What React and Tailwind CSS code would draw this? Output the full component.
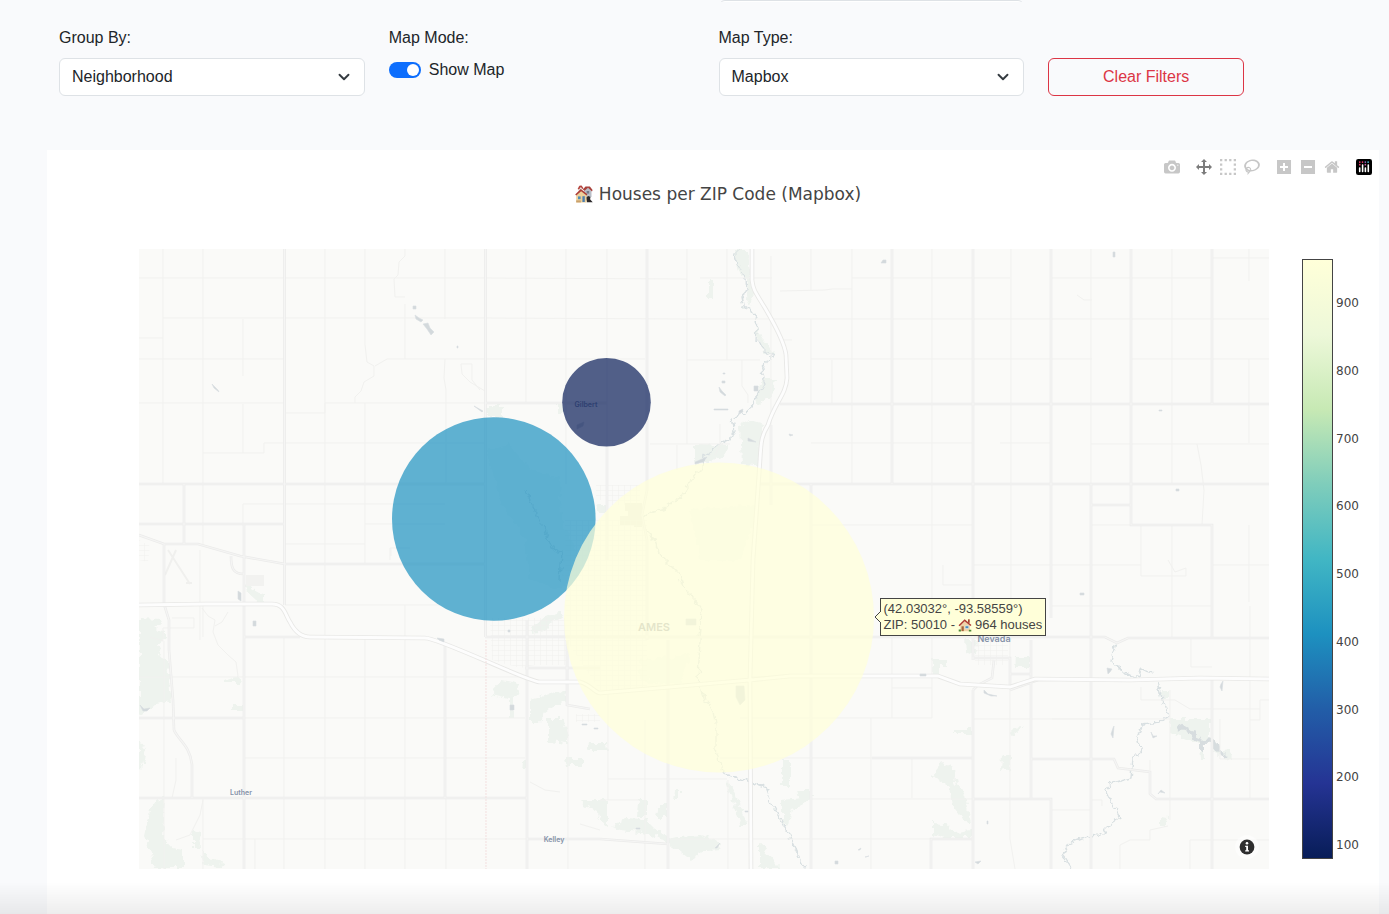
import React from "react";
import { ChevronDown } from "lucide-react";

const FLIP = "matrix(1 0 0 -1 0 850)";

const TOOLS = [
  [
    {
      name: "Download plot as a png",
      width: 1000,
      d: "m500 450c-83 0-150-67-150-150 0-83 67-150 150-150 83 0 150 67 150 150 0 83-67 150-150 150z m400 150h-120c-16 0-34 13-39 29l-31 93c-6 15-23 28-40 28h-340c-16 0-34-13-39-28l-31-94c-6-15-23-28-40-28h-120c-55 0-100-45-100-100v-450c0-55 45-100 100-100h800c55 0 100 45 100 100v450c0 55-45 100-100 100z m-400-550c-138 0-250 112-250 250 0 138 112 250 250 250 138 0 250-112 250-250 0-138-112-250-250-250z m365 380c-19 0-35 16-35 35 0 19 16 35 35 35 19 0 35-16 35-35 0-19-16-35-35-35z",
    },
  ],
  [
    {
      name: "Pan",
      width: 1000,
      active: true,
      d: "m1000 350l-187 188 0-125-250 0 0 250 125 0-188 187-187-187 125 0 0-250-250 0 0 125-188-188 186-187 0 125 252 0 0-250-125 0 187-188 188 188-125 0 0 250 250 0 0-126 187 188z",
    },
    {
      name: "Box Select",
      width: 1000,
      d: "m0 850l0-143 143 0 0 143-143 0z m286 0l0-143 143 0 0 143-143 0z m285 0l0-143 143 0 0 143-143 0z m286 0l0-143 143 0 0 143-143 0z m-857-286l0-143 143 0 0 143-143 0z m857 0l0-143 143 0 0 143-143 0z m-857-285l0-143 143 0 0 143-143 0z m857 0l0-143 143 0 0 143-143 0z m-857-286l0-143 143 0 0 143-143 0z m286 0l0-143 143 0 0 143-143 0z m285 0l0-143 143 0 0 143-143 0z m286 0l0-143 143 0 0 143-143 0z",
    },
    {
      name: "Lasso Select",
      width: 1031,
      d: "m1018 538c-36 207-290 336-568 286-277-48-473-256-436-463 10-57 36-108 76-151-13-66 11-137 68-183 34-28 75-41 114-42l-55-70 0 0c-2-1-3-2-4-3-10-14-8-34 5-45 14-11 34-8 45 4 1 1 2 3 2 5l0 0 113 140c16 11 31 24 45 40 4 3 6 7 8 11 48-3 100 0 151 9 278 48 473 255 436 462z m-624-379c-80 14-149 48-197 96 42 42 109 47 156 9 33-26 47-66 41-105z m-187-74c-19 16-33 37-39 60 50-32 109-55 174-68-42-25-95-24-135 8z m360 75c-34-7-69-9-102-8 8 62-16 128-68 170-73 59-175 54-244-5-9 20-16 40-20 61-28 159 121 317 333 354s407-60 434-217c28-159-121-318-333-355z",
    },
  ],
  [
    {
      name: "Zoom in",
      width: 875,
      d: "m1 787l0-875 875 0 0 875-875 0z m687-500l-187 0 0-187-125 0 0 187-188 0 0 125 188 0 0 187 125 0 0-187 187 0 0-125z",
    },
    {
      name: "Zoom out",
      width: 875,
      d: "m0 788l0-876 876 0 0 876-876 0z m688-500l-500 0 0 125 500 0 0-125z",
    },
    {
      name: "Reset view",
      width: 929,
      d: "m786 296v-267q0-15-11-26t-25-10h-214v214h-143v-214h-214q-15 0-25 10t-11 26v267q0 1 0 2t0 2l321 264 321-264q1-1 1-4z m124 39l-34-41q-5-5-12-6h-2q-7 0-12 3l-386 322-386-322q-7-4-13-4-7 2-12 7l-35 41q-4 5-3 13t6 12l401 334q18 15 42 15t43-15l136-114v109q0 8 5 13t13 5h107q8 0 13-5t5-13v-227l122-102q5-5 6-12t-4-13z",
    },
  ],
];

const TICKS = [900, 800, 700, 600, 500, 400, 300, 200, 100];

const PARKS = [
  "M139 618L162 619 160 626 152 628 166 632 166 638 158 644 160 656 168 660 170 690 172 701 155 704 146 712 139 716Z",
  "M150 810L157 801 165 797 163 838 172 848 183 850 183 868 155 868 150 850 144 836Z",
  "M139 740L146 750 142 770 139 770Z",
  "M193 830L200 832 201 848 193 848ZM200 850L212 858 224 864 222 868 204 866Z",
  "M224 680L236 676 242 680 241 683 224 683ZM234 705H242V711H234Z",
  "M247 584L263 595 263 603 256 600 245 590Z",
  "M530 628L545 617 560 612 563 618 550 622 545 630 533 632Z",
  "M493 690L502 680 517 683 519 694 508 699 495 696ZM509 698H514V718H509Z",
  "M530 700L545 696 555 690 566 692 568 700 555 705 545 712 540 722 530 722Z",
  "M548 718H562L568 736 568 744 548 742Z",
  "M589 743L607 743 608 751 587 751ZM522 760H527V769H521Z",
  "M566 758L582 758 582 766 568 766Z",
  "M580 800L608 800 608 828 603 825 597 812 585 806Z",
  "M612 828L625 818 645 819 655 829 670 838 700 835 718 840 722 850 706 851 690 860 672 846 655 836 640 832 620 830Z",
  "M639 800H646V817H638ZM658 805H668V818H656ZM675 790H680V800H674Z",
  "M726 780L733 788 747 825 741 825 732 800Z",
  "M760 840L765 850 772 860 780 868 760 868Z",
  "M782 800L811 797 803 806 792 810 788 828 782 822ZM782 759H791V786H782ZM797 790H811V798H799Z",
  "M735 250L748 250 750 275 755 290 750 305 747 300 748 280 738 273 736 262Z",
  "M755 318L760 335 768 345 775 355 765 352 756 335Z",
  "M762 380L776 380 771 395 760 404 755 400Z",
  "M740 425L748 420 764 425 760 445 757 465 742 464Z",
  "M695 445L728 446 725 455 710 462 695 465Z",
  "M708 280H714V299H708Z",
  "M486 406H503V417H486ZM557 404H563V413H557ZM597 505H607L605 514 599 514Z",
  "M932 775L943 762 953 768 957 785 965 795 971 822 966 822 953 805 950 787Z",
  "M932 823L945 824 955 832 971 830 971 838 945 838 932 834Z",
  "M933 658H946V666H939V675H933ZM965 640L976 640 974 656 966 652ZM1015 658H1031V667H1014ZM953 729H972V734H952Z",
  "M1002 757L1010 755 1010 769 1001 771ZM1011 728L1024 727 1012 735Z",
  "M1171 719L1210 719 1210 744 1198 743 1171 733Z",
  "M1213 752L1230 750 1232 757 1222 758ZM1160 690H1169V698H1161ZM1161 817L1169 818 1165 827 1161 826ZM1200 745H1204V760H1201Z",
];

const CAMPUS = [
  "M487 450L510 445 530 470 560 478 562 520 580 560 560 590 530 580 525 540 500 500Z",
  "M690 510L760 505 740 560 700 560ZM640 660L690 655 680 685 640 680Z",
];

const MINOR_ROADS = [
  "M163 249V484M203 249V544M203 604V637M203 798V869M325 249V637M365 249V345L367 362 374 366 374 376 364 382 361 391 355 397 355 403M365 403V564M405 304V359M405 249V256L399 262 398 275 394 279 395 297H405M445 249V319M445 359L444 378 446 390V484",
  "M526 249V404M566 249V484M607 249V447M687 249V444M727 249V360M771 256V425M811 249V290M811 319V404M832 360V403M852 249V484M932 249V637M1011 249V640M1091 249V484M1172 249V484M1249 249V281M1249 359V443M1249 525V602",
  "M139 278H485L687 279M700 278H772M852 278H1010M1052 278H1211M1212 258H1269M163 318H485L687 319H1269M139 338H163M139 359H284M387 359H485L645 359M687 360H760M811 359H1092M1132 359H1269",
  "M139 403H284M325 403H485M286 413H325V403M203 453H264V443H485M650 444H730M811 443H973M1000 443H1050M1091 444H1269M243 504H445M365 524H445M285 544H365M811 525H973M1091 525H1132",
  "M243 319V376M243 404V453M243 504V525M285 605H440M325 637V869M365 637V869M405 605V869M284 637V869M446 798V869M568 650V869M608 690V800M645 720V869M728 780V869",
  "M139 677H525M244 718H525M244 758H525M608 779H727M750 677H812M740 718H932M720 758H872M812 799H972M203 839H526M600 800H640M668 839H930M871 718V869M932 637V718M892 637V718M892 688H932M912 758V798",
  "M973 565H1141V525M1141 565V576H1186V568L1175 572 1168 560M1051 606H1212M1211 565H1269M1250 606V799M943 565V585H973M1172 525V637M1191 637V667H1212M1052 719H1170M972 719H1092M1051 810H1091M1010 640V839L1015 869",
  "M1120 869V845L1130 840H1150V830L1168 826M1190 869V840H1269M1170 690V820M1092 800H1102V806M1141 687V700H1175L1190 709H1260V700H1269M1150 760V770M1220 719V759H1269M1260 709V720H1250",
  "M164 641V869M150 637L163 641V628H194V618H172M163 718H139M176 758V780L172 798M200 640V550M255 839V869",
  "M461 364H472L472 380 480 390M461 364L462 374 470 382 485 391M387 359L375 366M742 360V386L748 395V403M720 424V445L715 455M1197 444L1201 465 1204 490 1202 525M1077 295L1084 300H1092",
  "M780 291L825 290 832 289H852M780 340H792M677 445V470M390 548V560M390 548H410M391 548V556",
  "M202 608L208 616 215 620 213 632 218 645 228 655 236 662 238 676M228 612L222 622 215 626M176 840L190 835 200 815 203 800M530 782L545 790 560 792M600 830L580 824",
];

const MAJOR_ROADS = [
  "M139 484H485M139 524H284M139 535L164 544H198L240 556 285 564H485M184 484V544M164 544V604M244 525V869M284.500 249V605M485.500 249V637M527 620V869M445 645V798M231 556C231 568 233 574 244 574",
  "M164 604L169 620 169 650 173 700 174 730C178 740 190 745 192 765V798M139 718H243M139 798H527M527 839H600L668 844M486 403H607M244 637H300",
  "M607 447V560M647 249V490L642 515 647 540V640M668 640V869M771 425V505M780 404H1269M760 484H1269M892 249V484M811 484V869M973 249V660M973 690V869M1051 249V618M1131 249V525H1212V637M1212 249V404M1091 484V869",
  "M1091 505H1131M1212 680V869M872 758H972M1031 759H1114L1118 768 1150 772V794L1156 799H1269M973 799H1051V869M931 869V839H972M1031 640V798M1000 637H1105L1117 643 1128 638H1269M485 637H1000",
  "M973 690L978 685 992 678 994 660M972 658H1010V687M1010 674H1031M1010 690L1038 680M525 668H600M567 640V705L590 709",
];

const HIGHWAYS = [
  "M752 249V280C753 290 756 293 765 308C775 325 785 345 786 355L787 378C786 395 775 402 768 425C762 435 761 440 760 460L753 560 750 680 751 869",
  "M139 605L205 604H272C285 604 285 615 290 622C294 630 300 637 310 637L425 638C440 638 528 682 540 682H580C590 684 595 693 600 693L670 687 750 680 790 676H938L960 684 1010 687 1035 679 1130 680 1200 678 1269 679",
];

const RIVERS = [
  "M741 249L735 255 738 265 742 272 746 280 747 290 742 296 744 306 750 310 756 318 757 330 756 340 762 346 768 352 774 356 768 360 762 370 765 385 760 392 755 398 750 408 740 415 732 418 734 430 730 440 718 445 710 452 703 456 702 468 695 475 685 490 680 498 665 508 650 513 643 518",
  "M645 530L655 540 660 555 680 575 685 590 695 600 702 610 700 640 698 680 705 700 713 710 716 730 716 750 722 770 727 776 745 780 765 787 770 800 780 818 790 838 805 869",
  "M1116 643L1111 660 1125 674 1140 678 1142 670 1153 673M1158 682L1162 700 1168 716 1160 722 1143 724 1137 737 1141 752 1133 758 1131 778 1112 783 1106 790 1113 805 1120 818 1110 825 1100 835 1088 836 1070 843 1062 855 1073 869",
  "M525 490L535 510 545 530 552 548 562 552 560 580",
];

const PONDS = [
  "M413 306h3v3h-3zM415 315l4 3 4 2-2 2-5-3zM423 324l5-1 2 5 4 4-3 3-4-6zM457 346h1v2h-1z",
  "M212 384l6 6 1 2-5-4zM474 406l9 5-1 1zM238 591l3 2 0 8-3-2zM253 621h3v5h-3zM140 705l4 4 6-1-3 3-4 0z",
  "M719 387l3 4 4 4-1 1-5-4zM714 409h14v1h-14zM754 386h4v5h-4zM739 411l4-2-1 3-3 1zM748 438l8 4-8-1zM695 462l12-5-4 5-8 2zM723 373h2v1h-2zM722 381h3v2h-3z",
  "M883 260h3v3h-5zM1113 252h2v5h-2zM789 434l4 1-3 1zM1159 410h3v1h-3zM1176 489h3v2h-3z",
  "M437 638l7 1 0 3-5-2zM510 705h4v5h-4zM508 630h2v2h-2zM582 724h5v1h-5zM594 728h4v1h-4z",
  "M736 686l8 0 1 14-5 5-4-8zM686 619h10v6h-10zM920 674h6v2h-6zM984 690l4 4 9 2-6 0-7-3zM1107 668l5 1-2 3-2 2zM1113 728l1-2-1 12-2-4zM1151 732l2 4 4 0-4 2zM1080 593h4v2h-4zM1221 684l2-3-1 10-2-4zM1158 794l3-4 4 3-5-1z",
  "M636 828h4v1h-4zM715 848l5-5-3 5zM835 861h3v3h-3zM975 862l6-1-3 3zM858 850l3-2-1 2zM865 857l4-1-3 1zM745 811h3v1h-3zM987 821h1v3h-1z",
  "M577 425l7-3-1 4-6 3z",
];

function CountyMap() {
  return (
    <svg
      className="block h-full w-full"
      viewBox="139 249 1130 620"
      preserveAspectRatio="xMidYMid slice"
      role="img"
      aria-label="Map of houses per ZIP code around Ames"
    >
      <defs>
        <filter id="rough" x="-5%" y="-5%" width="110%" height="110%">
          <feTurbulence type="fractalNoise" baseFrequency="0.16" numOctaves="2" seed="4" />
          <feDisplacementMap in="SourceGraphic" scale="9" xChannelSelector="R" yChannelSelector="G" />
        </filter>
        <pattern id="streets" width="6" height="5" patternUnits="userSpaceOnUse">
          <path d="M0 0H6M0 0V5" stroke="#efefed" strokeWidth="1" fill="none" />
        </pattern>
      </defs>
      <rect x="139" y="249" width="1130" height="620" fill="#fafaf8" />
      <g filter="url(#rough)">
        <path d={PARKS.join("")} fill="#eef3ee" />
        <path d={CAMPUS.join("")} fill="#f5f8f4" />
        <path d={RIVERS.join("")} fill="none" stroke="#d9e0e2" strokeWidth="1.4" />
        <path
          d="M1177 729L1182 726 1190 731 1195 738 1205 742 1215 741 1218 750 1224 757M1202 742L1202 750"
          fill="none"
          stroke="#d7dddf"
          strokeWidth="4"
        />
      </g>
      <path d="M625 503H642V527H634V525H620V516H628V511H625Z" fill="#e9ebe8" />
      <path d="M246 575H264V586H246Z" fill="#f2f2f0" />
      <path
        d="M490 618H566V665H535L520 668 492 660ZM596 485H640V505H607V500H596ZM565 520H647V690H600L566 640ZM975 641H1008V665H975ZM576 714H600V722H576ZM139 540L150 546 148 562 139 560Z"
        fill="url(#streets)"
      />
      <path d="M168 550L190 584M176 550L165 575M186 583H192" fill="none" stroke="#f0f0ee" strokeWidth="2" />
      <path d={MINOR_ROADS.join("")} fill="none" stroke="#f1f1ef" strokeWidth="1" />
      <path d={MAJOR_ROADS.join("")} fill="none" stroke="#ebebea" strokeWidth="2.6" />
      <path d={MAJOR_ROADS.join("")} fill="none" stroke="#f5f5f4" strokeWidth="1.2" />
      <path d={HIGHWAYS.join("")} fill="none" stroke="#e8e8e6" strokeWidth="4.6" />
      <path d={HIGHWAYS.join("")} fill="none" stroke="#fdfdfd" strokeWidth="2.8" />
      <path d="M486 640V869" stroke="#f3dfdf" strokeWidth="1" strokeDasharray="2 1" />
      <path d={PONDS.join("")} fill="#d3d9dc" stroke="#d9dee0" strokeWidth="0.6" />

      <g
        fill="#8592a8"
        fontFamily="Inter, 'Open Sans', sans-serif"
        fontWeight="600"
        fontSize="7"
        textAnchor="middle"
      >
        <text x="586" y="407">Gilbert</text>
        <text x="241" y="795">Luther</text>
        <text x="554" y="842">Kelley</text>
        <text x="994" y="642" fontSize="9">Nevada</text>
        <text x="654" y="631" fontSize="11" fill="#a3a7a8">AMES</text>
      </g>

      <g fillOpacity="0.7">
        <circle cx="606.5" cy="402.3" r="44.3" fill="#081d58" />
        <circle cx="493.8" cy="519" r="101.8" fill="#1d91c0" />
        <circle cx="719" cy="617.5" r="155" fill="#ffffd9" />
      </g>
    </svg>
  );
}

function HouseIcon({ className }) {
  return (
    <svg className={className} viewBox="0 0 16 16" aria-hidden="true">
      <path d="M11.4 1.500h2v4h-2z" fill="#a2492f" />
      <path d="M2.500 8L8 3.400 13.500 8v7h-11z" fill="#efd3a9" />
      <path d="M.6 8.400L7.600 1.400 15.400 8l-1 1.200L7.600 3.800 1.800 9.400z" fill="#b03a35" />
      <path d="M4 9.500h2.600v5.500H4z" fill="#a5643b" />
      <path d="M8.200 9h4v3h-4z" fill="#4b8fbd" stroke="#fff" strokeWidth=".5" />
      <path d="M.8 13h2.500v2.500H.8zM12.400 13.300h2.800v2.200h-2.800z" fill="#4f8a3b" />
    </svg>
  );
}

function HousesIcon({ className }) {
  return (
    <svg className={className} viewBox="0 0 18 18" aria-hidden="true">
      <path d="M3.5 1.5L5.5.6 7.500 2v6h-4z" fill="#e5ddda" />
      <path d="M2.600 4L4.400.8 6.600.4 8.600 3.400 7.400 4 5.800 2 4 4.400z" fill="#b5433d" />
      <path d="M8.500 6L13 2.200 16.500 6v6h-8z" fill="#b9bec7" />
      <path d="M7.800 4.400L10.500 1.400h4.400L17.600 5l-.6 1.400-4-3.600-3.400 3z" fill="#a8403a" />
      <path d="M11.600 6h2.600v2.600h-2.600z" fill="#737d8e" />
      <path d="M10.500 12.600l3-1.600 2 1-.4 2.200 2.600 3H12z" fill="#2c2a2c" />
      <path d="M1.200 9.600L6.200 5l5.400 4.600v7.800H1.200z" fill="#edd09b" />
      <path d="M.2 9.400L5.800 4l6.600 5.200-.8 1.400L6.100 6.200 1.200 10.600z" fill="#ac3c36" />
      <path d="M3 11.400h2.600v2.800H3z" fill="#4d8db8" />
      <path d="M7.400 11.200h2.400v5.800H7.400z" fill="#4d7fae" />
      <path d="M1.200 15.400h4.600v2H1.200z" fill="#c9a06c" />
    </svg>
  );
}

function PlotlyLogo() {
  const dots = [
    [27, 22, "#ed3a6f"],
    [50, 22, "#ed3a6f"],
    [73, 22, "#8a6cc0"],
    [96, 22, "#4cc3e0"],
    [27, 44, "#ed3a6f"],
    [73, 44, "#c65aa2"],
  ];
  return (
    <svg className="block h-4 w-4" viewBox="0 0 132 132" aria-hidden="true">
      <rect width="132" height="132" rx="18" fill="#000" />
      {dots.map(([x, y, color]) => (
        <circle key={`${x}-${y}`} cx={x + 4} cy={y + 3} r="7" fill={color} />
      ))}
      <g fill="#fff">
        <rect x="24" y="68" width="13" height="42" rx="6" />
        <rect x="48" y="44" width="13" height="66" rx="6" />
        <rect x="71" y="68" width="13" height="42" rx="6" />
        <rect x="95" y="44" width="13" height="66" rx="6" />
      </g>
    </svg>
  );
}

function SelectField({ id, label, options }) {
  return (
    <div className="col-span-3 px-3">
      <label htmlFor={id} className="mb-2 block">
        {label}
      </label>
      <div className="grid items-center">
        <select
          id={id}
          className="col-start-1 row-start-1 h-[38px] w-full appearance-none rounded-md border border-[#dee2e6] bg-white pr-9 pl-3"
        >
          {options.map((option) => (
            <option key={option}>{option}</option>
          ))}
        </select>
        <ChevronDown
          className="pointer-events-none col-start-1 row-start-1 mr-3 h-[18px] w-[18px] justify-self-end text-[#343a40]"
          strokeWidth={2.5}
          aria-hidden="true"
        />
      </div>
    </div>
  );
}

function Filters() {
  return (
    <form className="pr-[13px] text-base leading-6 text-[#212529]">
      <div className="grid h-[2px] grid-cols-12 items-end overflow-hidden">
        <div className="col-span-3 col-start-7 px-3">
          <div className="h-[38px] rounded-md border border-[#dee2e6] bg-white" />
        </div>
      </div>
      <div className="mt-6 grid grid-cols-12 items-end">
        <SelectField id="group-by" label="Group By:" options={["Neighborhood", "ZIP Code"]} />
        <div className="col-span-3 self-start px-3">
          <div className="mb-2">Map Mode:</div>
          <label className="flex items-center gap-2">
            <input type="checkbox" defaultChecked className="peer sr-only" />
            <span className="flex h-4 w-8 items-center justify-end rounded-full bg-[#0d6efd] px-[2px]">
              <span className="h-3 w-3 rounded-full bg-white" />
            </span>
            Show Map
          </label>
        </div>
        <SelectField id="map-type" label="Map Type:" options={["Mapbox", "Scatter"]} />
        <div className="col-span-2 px-3">
          <button
            type="button"
            className="h-[38px] w-full rounded-md border border-[#dc3545] text-[#dc3545]"
          >
            Clear Filters
          </button>
        </div>
      </div>
    </form>
  );
}

function Toolbar() {
  return (
    <div className="flex justify-end gap-2 pr-[3px]">
      {TOOLS.map((group) => (
        <div key={group[0].name} className="flex">
          {group.map((tool) => (
            <button
              key={tool.name}
              type="button"
              aria-label={tool.name}
              className={tool.active ? "px-1 text-[#7c7c7c]" : "px-1 text-[#c7c7c7]"}
            >
              <svg className="block h-4 w-4" viewBox={`0 0 ${tool.width} 1000`}>
                <path d={tool.d} transform={FLIP} fill="currentColor" />
              </svg>
            </button>
          ))}
        </div>
      ))}
      <a href="https://plotly.com/" aria-label="Produced with Plotly" className="px-1">
        <PlotlyLogo />
      </a>
    </div>
  );
}

function HoverLabel() {
  return (
    <div className="absolute top-[349px] left-[65%] flex items-center font-['Liberation_Sans',Arial,sans-serif] text-[13px] leading-4 text-[#444]">
      <svg className="relative z-10 -mr-px block h-[38px] w-[7px]" viewBox="0 0 7 38" aria-hidden="true">
        <path d="M7 13L1 19 7 25" fill="#ffffd9" stroke="#444" />
        <path d="M6.500 14V24" stroke="#ffffd9" />
      </svg>
      <div className="border border-[#444] bg-[#ffffd9] px-[3px] py-[2px] whitespace-nowrap">
        <div>(42.03032°, -93.58559°)</div>
        <div className="flex items-center gap-[3px]">
          ZIP: 50010 - <HouseIcon className="h-[14px] w-[14px]" /> 964 houses
        </div>
      </div>
    </div>
  );
}

function Colorbar() {
  return (
    <div className="mt-[10px] flex gap-[3px]">
      <div className="h-[600px] w-[31px] border border-[#444] bg-[linear-gradient(to_top,#081d58,#253494,#225ea8,#1d91c0,#41b6c4,#7fcdbb,#c7e9b4,#edf8d9,#ffffd9)]" />
      <div className="mt-9 flex h-[558px] w-6 flex-col justify-between text-xs leading-4 text-[#444]">
        {TICKS.map((tick) => (
          <span key={tick}>{tick}</span>
        ))}
      </div>
    </div>
  );
}

export default function App() {
  return (
    <div className="flex min-h-screen flex-col bg-[#f9fafc] pr-[10px] pl-[47px] font-['Liberation_Sans',Arial,sans-serif]">
      <Filters />
      <main className="mt-[54px] flex-1 bg-white pt-[9px] pb-[45px] font-[Verdana,'DejaVu_Sans',sans-serif]">
        <Toolbar />
        <h1 className="mt-[7px] flex items-center justify-center gap-[6px] pl-[10px] text-[17px] leading-6 font-normal text-[#444]">
          <HousesIcon className="h-[18px] w-[18px]" />
          Houses per ZIP Code (Mapbox)
        </h1>
        <div className="mt-[43px] flex pr-[19px] pl-[92px]">
          <div className="relative mr-[33px] h-[620px] min-w-0 flex-1">
            <CountyMap />
            <HoverLabel />
            <button
              type="button"
              aria-label="Toggle attribution"
              className="absolute right-[10px] bottom-[10px] rounded-full bg-white/50 p-1"
            >
              <svg className="block h-4 w-4" viewBox="0 0 16 16" aria-hidden="true">
                <circle cx="8" cy="8" r="7.400" fill="#2f2f2f" />
                <circle cx="8" cy="4.300" r="1.300" fill="#fff" />
                <path d="M6.200 6.700H9V11.200H10V12.400H6.200V11.200H7.200V7.900H6.200Z" fill="#fff" />
              </svg>
            </button>
          </div>
          <Colorbar />
        </div>
      </main>
      <div className="pointer-events-none fixed inset-x-0 bottom-0 h-8 bg-linear-to-b from-transparent to-black/7" />
    </div>
  );
}
